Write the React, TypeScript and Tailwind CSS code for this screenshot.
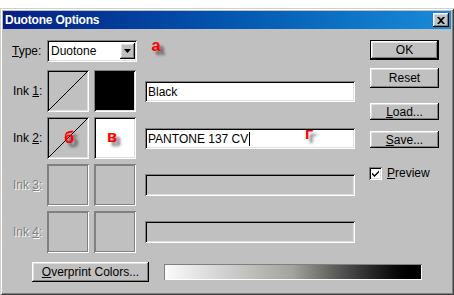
import React from 'react'

// Win2000 style bevels
const sunken = 'shadow-[inset_1px_1px_0_#808080,inset_-1px_-1px_0_#ffffff,inset_2px_2px_0_#000000,inset_-2px_-2px_0_#dfdfdf]'
const sunkenGrey = 'shadow-[inset_1px_1px_0_#808080,inset_-1px_-1px_0_#ffffff,inset_2px_2px_0_#808080,inset_-2px_-2px_0_#808080]'
const raised = 'shadow-[inset_-1px_-1px_0_#000000,inset_1px_1px_0_#ffffff,inset_-2px_-2px_0_#808080,inset_2px_2px_0_#dfdfdf]'
const disabledText = 'text-[#808080] [text-shadow:1px_1px_0_#ffffff]'
const redMark = "absolute font-['Liberation_Mono','Courier_New',monospace] font-bold text-[17px] leading-none text-[#ff0000] [text-shadow:4px_4px_3px_rgba(0,0,0,0.55)]"

function Btn({ children, h = 20, def = false }: { children: React.ReactNode, h?: number, def?: boolean }) {
  const height = h === 20 ? 'h-[20px]' : 'h-[17px]'
  if (def) {
    return (
      <div className={`w-[69px] ${height} border border-black`}>
        <div className={`w-full h-full ${raised} bg-[#c0c0c0] flex items-center justify-center`}>{children}</div>
      </div>
    )
  }
  return <div className={`w-[69px] ${height} ${raised} bg-[#c0c0c0] flex items-center justify-center whitespace-nowrap`}>{children}</div>
}

function Diagonal() {
  return (
    <svg width="42" height="42" className="absolute inset-0">
      <line x1="2" y1="40" x2="40" y2="2" stroke="#000" strokeWidth="1" />
    </svg>
  )
}

function InkRow({ n, disabled, box2, value }: { n: number, disabled?: boolean, box2?: 'black' | 'white', value?: string }) {
  return (
    <div className="flex items-center h-[42px]">
      <div className={`w-[35px] shrink-0 pl-[1px] ${disabled ? disabledText : ''}`}>Ink <u>{n}</u>:</div>
      {disabled ? (
        <>
          <div className={`w-[42px] h-[42px] shrink-0 ${sunkenGrey}`} />
          <div className={`w-[42px] h-[42px] shrink-0 ml-[5px] ${sunkenGrey}`} />
          <div className={`w-[210px] h-[22px] shrink-0 ml-[9px] bg-[#c0c0c0] ${sunken}`} />
        </>
      ) : (
        <>
          <div className={`relative w-[42px] h-[42px] shrink-0 bg-[#c0c0c0] ${sunken}`}>
            <Diagonal />
          </div>
          <div className={`w-[42px] h-[42px] shrink-0 ml-[5px] ${box2 === 'black' ? 'bg-black' : 'bg-white'} ${sunken}`} />
          <div className={`w-[210px] h-[21px] shrink-0 ml-[9px] bg-white ${sunken} flex items-center pl-[3px] pt-[1px]`}>
            <span className="whitespace-nowrap">{value}</span>
            {n === 2 && <span className="inline-block w-[1px] h-[14px] bg-black ml-[1px]" />}
          </div>
        </>
      )}
    </div>
  )
}

export default function App() {
  return (
    <div className="relative w-[454px] h-[295px] bg-white pt-[8px] overflow-hidden font-['Liberation_Sans',Arial,sans-serif] text-[12px] text-black">
      <div className="w-[454px] h-[287px] bg-[#c0c0c0] p-[3px] shadow-[inset_1px_1px_0_#d4d0c8,inset_-1px_-1px_0_#404040,inset_2px_2px_0_#ffffff,inset_-2px_-2px_0_#808080]">
        {/* title bar */}
        <div className="h-[18px] flex items-center justify-between bg-linear-to-r from-[#081c84] to-[#1a8cd8] pl-[2px] pr-[2px]">
          <span className="text-white font-bold text-[12px] tracking-[-0.2px]">Duotone Options</span>
          <div className={`w-[16px] h-[14px] bg-[#c0c0c0] ${raised} flex items-center justify-center`}>
            <svg width="8" height="7" viewBox="0 0 8 7">
              <path d="M0 0h2l2 2 2-2h2L5 3.5 8 7H6L4 5 2 7H0l3-3.5z" fill="#000" />
            </svg>
          </div>
        </div>

        {/* body */}
        <div className="flex pt-[11px]">
          <div className="w-[352px] shrink-0 pl-[9px]">
            <div className="flex items-center h-[22px]">
              <div className="w-[35px]"><u>T</u>ype:</div>
              <div className={`w-[90px] h-[22px] bg-white ${sunken} flex items-center justify-between pl-[4px] pr-[2px]`}>
                <span>Duotone</span>
                <div className={`w-[15px] h-[16px] bg-[#c0c0c0] ${raised} flex items-center justify-center`}>
                  <svg width="7" height="4" viewBox="0 0 7 4"><path d="M0 0h7L3.5 4z" fill="#000" /></svg>
                </div>
              </div>
            </div>

            <div className="flex flex-col gap-[5px] mt-[8px]">
              <InkRow n={1} box2="black" value="Black" />
              <InkRow n={2} box2="white" value="PANTONE 137 CV" />
              <InkRow n={3} disabled />
              <InkRow n={4} disabled />
            </div>
          </div>

          <div className="flex flex-col ml-[15px]">
            <Btn def>OK</Btn>
            <div className="mt-[8px]"><Btn>Reset</Btn></div>
            <div className="mt-[15px]"><Btn h={17}><span><u>L</u>oad...</span></Btn></div>
            <div className="mt-[11px]"><Btn h={17}><span><u>S</u>ave...</span></Btn></div>
            <div className="flex items-center mt-[16px] -ml-[1px]">
              <div className={`w-[13px] h-[13px] bg-white ${sunken} flex items-center justify-center`}>
                <svg width="7" height="7" viewBox="0 0 7 7">
                  <path d="M0 2.5l2.5 2.5L7 0.5v2L2.5 7 0 4.5z" fill="#000" />
                </svg>
              </div>
              <span className="ml-[5px]"><u>P</u>review</span>
            </div>
          </div>
        </div>

        {/* bottom row */}
        <div className="flex items-center mt-[9px] pl-[29px]">
          <div className={`w-[117px] h-[20px] shrink-0 bg-[#c0c0c0] ${raised} flex items-center justify-center whitespace-nowrap`}>
            <span><u>O</u>verprint Colors...</span>
          </div>
          <div className="w-[258px] h-[16px] shrink-0 ml-[15px] shadow-[inset_1px_1px_0_#808080,inset_-1px_-1px_0_#ffffff] p-[1px]">
            <div className="w-full h-full bg-linear-to-r from-[#fbfbfb] via-[#a2a29e] to-black" />
          </div>
        </div>
      </div>

      {/* red annotation letters */}
      <span className={`${redMark} left-[151px] top-[38px]`}>а</span>
      <span className={`${redMark} left-[64px] top-[130px]`}>б</span>
      <span className={`${redMark} left-[107px] top-[129px]`}>в</span>
      <span className={`${redMark} left-[304px] top-[126px]`}>г</span>
    </div>
  )
}
